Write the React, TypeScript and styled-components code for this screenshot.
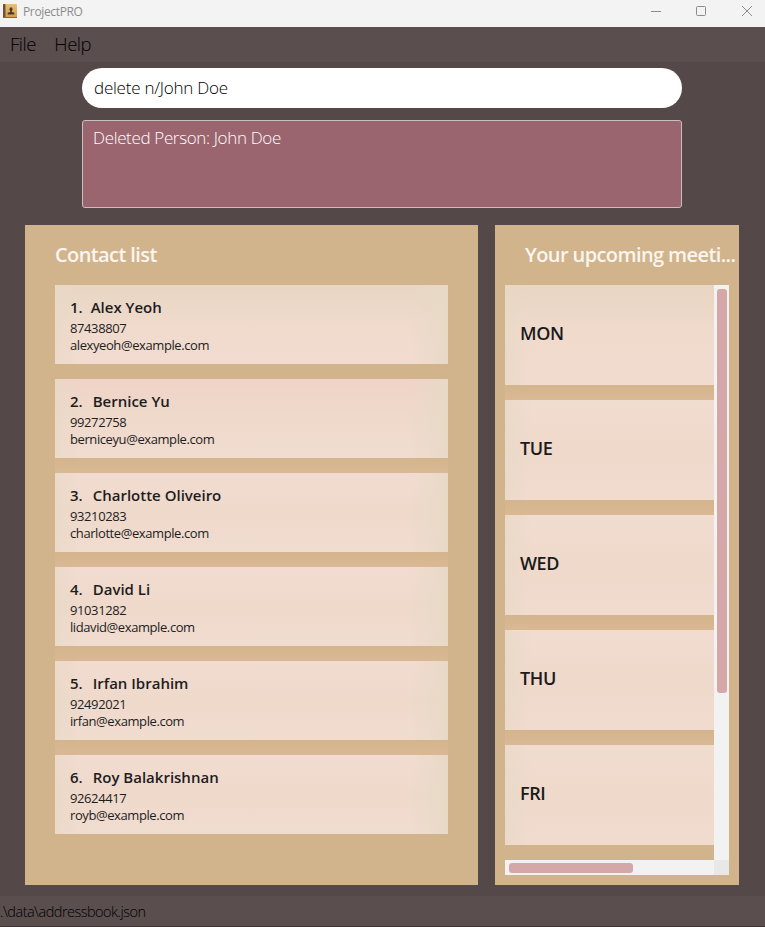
import React from "react";
import styled, { createGlobalStyle } from "styled-components";

const GlobalStyle = createGlobalStyle`
  *, *::before, *::after { box-sizing: border-box; }
  html, body { margin: 0; padding: 0; overflow: hidden; }
  body { font-family: "Open Sans", "Noto Sans", sans-serif; }
`;

const Window = styled.div`
  width: 765px;
  height: 927px;
  display: flex;
  flex-direction: column;
  background: #554849;
`;

const TitleBar = styled.header`
  height: 27px;
  flex: none;
  display: flex;
  align-items: flex-start;
  background: #f3f3f3;
  padding-left: 3px;
`;

const AppIcon = styled.svg`
  width: 14px;
  height: 14px;
  margin-top: 4px;
  flex: none;
`;

const AppName = styled.span`
  margin-left: 6px;
  flex: 1;
  font-size: 12px;
  line-height: 24px;
  letter-spacing: -0.35px;
  color: #8b8b8b;
`;

const WindowControl = styled.svg`
  width: 12px;
  height: 12px;
  margin: 5px 17px 0;
  flex: none;
  fill: none;
  stroke: #8c8c8c;
  &:last-child { margin-right: 12px; }
`;

const MenuBar = styled.nav`
  height: 35px;
  flex: none;
  display: flex;
  gap: 18.5px;
  padding-left: 10px;
  background: #5a4e4f;
`;

const MenuItem = styled.span`
  font-size: 18.5px;
  font-weight: 300;
  line-height: 34px;
  letter-spacing: -0.5px;
  color: #000;
`;

const CommandBox = styled.div`
  width: 600px;
  height: 40px;
  flex: none;
  margin: 6px 0 0 82px;
  padding-left: 12px;
  border-radius: 20px;
  background: #fff;
  color: #000;
  font-size: 17px;
  font-weight: 300;
  line-height: 40px;
  letter-spacing: -0.23px;
`;

const ResultBox = styled.div`
  width: 600px;
  height: 88px;
  flex: none;
  margin: 12px 0 0 82px;
  padding: 4px 10px;
  border: 1px solid #c9bfc0;
  border-radius: 3px;
  background: #9b6570;
  color: #fff;
  font-size: 17px;
  font-weight: 300;
  line-height: 25px;
  letter-spacing: -0.35px;
`;

const Panels = styled.main`
  display: flex;
  gap: 17px;
  height: 660px;
  flex: none;
  margin: 17px 26px 0 25px;
`;

const Panel = styled.section<{ $width: number }>`
  width: ${(p) => p.$width}px;
  background: #d1b48c;
`;

const PanelTitle = styled.h2`
  margin: 0;
  height: 60px;
  padding-left: 30px;
  font-size: 20px;
  font-weight: 600;
  line-height: 60px;
  letter-spacing: -0.6px;
  white-space: nowrap;
  color: #fbf5ef;
`;

const ContactList = styled.div`
  width: 393px;
  margin-left: 30px;
`;

const ContactCard = styled.article<{ $first: boolean; $blush: boolean }>`
  height: 79px;
  padding: 11px 15px 0;
  color: #1d1d1d;
  background:
    linear-gradient(90deg, #e8d9c6b0 0, #e8d9c600 26px, #e8d9c600 calc(100% - 38px), #e8d9c6 100%),
    ${(p) =>
      p.$first
        ? "linear-gradient(#e8d6c3, #efdacc 50%, #f2dcd1)"
        : p.$blush
          ? "linear-gradient(#f1d3c7, #eed9cb 45%, #f1dcd0)"
          : "linear-gradient(#f2dcd1, #eed9cb 50%, #f1dcd0)"};
`;

const CardGap = styled.div<{ $tinted: boolean }>`
  height: 15px;
  background: ${(p) => (p.$tinted ? "linear-gradient(#d3b58c, #dab895)" : "#d1b48c")};
`;

const ContactName = styled.div<{ $gap: number }>`
  display: flex;
  gap: ${(p) => p.$gap}px;
  margin-bottom: 2px;
  font-size: 15px;
  font-weight: 600;
  line-height: 22px;
`;

const ContactDetail = styled.div<{ $track: number }>`
  font-size: 13px;
  line-height: 17px;
  letter-spacing: ${(p) => p.$track}px;
`;

const ScrollPane = styled.div`
  display: grid;
  grid-template-columns: 209px 15px;
  grid-template-rows: 575px 15px;
  width: 224px;
  margin-left: 10px;
`;

const DayList = styled.div`
  overflow: hidden;
`;

const DayCard = styled.div<{ $first: boolean }>`
  height: 100px;
  padding-left: 15px;
  font-size: 18px;
  font-weight: 600;
  line-height: 97px;
  letter-spacing: -0.4px;
  color: #1a1a1a;
  background:
    linear-gradient(90deg, #e8d9c6b0 0, #e8d9c600 26px),
    ${(p) =>
      p.$first
        ? "linear-gradient(#e8d5c2, #efdacc 45%, #f1dbcf)"
        : "linear-gradient(#f1dcd0, #eed9cb 50%, #f1dbcf)"};
`;

const VerticalTrack = styled.div`
  background: #f2f2f2;
  padding: 4px 2px 0 3px;
`;

const HorizontalTrack = styled.div`
  background: #f2f2f2;
  padding: 3px 0 0 4px;
`;

const Corner = styled.div`
  background: #e8e8e8;
`;

const Thumb = styled.div<{ $w: number; $h: number }>`
  width: ${(p) => p.$w}px;
  height: ${(p) => p.$h}px;
  border-radius: 3px;
  background: #d4a8a9;
`;

const StatusBar = styled.footer`
  height: 31px;
  flex: none;
  margin-top: 11px;
  border-bottom: 1px solid #3e3235;
  background: #5a4e4f;
  font-size: 14.5px;
  font-weight: 300;
  line-height: 31px;
  letter-spacing: -0.52px;
  color: #000;
`;

const contacts = [
  { name: "Alex Yeoh", phone: "87438807", email: "alexyeoh@example.com" },
  { name: "Bernice Yu", phone: "99272758", email: "berniceyu@example.com" },
  { name: "Charlotte Oliveiro", phone: "93210283", email: "charlotte@example.com" },
  { name: "David Li", phone: "91031282", email: "lidavid@example.com" },
  { name: "Irfan Ibrahim", phone: "92492021", email: "irfan@example.com" },
  { name: "Roy Balakrishnan", phone: "92624417", email: "royb@example.com" },
];

const days = ["MON", "TUE", "WED", "THU", "FRI"];

export default function App() {
  return (
    <>
      <GlobalStyle />
      <Window>
        <TitleBar>
          <AppIcon viewBox="0 0 14 14">
            <defs>
              <linearGradient id="cover" x1="0" y1="0" x2="0" y2="1">
                <stop offset="0" stopColor="#e6c078" />
                <stop offset="1" stopColor="#d19a45" />
              </linearGradient>
            </defs>
            <rect x="0" y="0" width="14" height="14" rx="0.8" fill="url(#cover)" />
            <rect x="0" y="0" width="2.5" height="14" rx="0.8" fill="#6b5238" />
            <path d="M0 13.5h14" stroke="#8a6536" strokeWidth="1" />
            <ellipse cx="8" cy="5.2" rx="1.5" ry="1.9" fill="#4a3828" />
            <path d="M7.2 6h1.6v2l2.5.8v1.6H4.700V8.800l2.500-.8z" fill="#4a3828" />
          </AppIcon>
          <AppName>ProjectPRO</AppName>
          <WindowControl viewBox="0 0 12 12"><path d="M2 6.500h10" /></WindowControl>
          <WindowControl viewBox="0 0 12 12"><rect x="1.500" y="1.500" width="9" height="9" rx="1" /></WindowControl>
          <WindowControl viewBox="0 0 12 12"><path d="M1 1l10 10M11 1L1 11" /></WindowControl>
        </TitleBar>
        <MenuBar>
          <MenuItem>File</MenuItem>
          <MenuItem>Help</MenuItem>
        </MenuBar>
        <CommandBox>delete n/John Doe</CommandBox>
        <ResultBox>Deleted Person: John Doe</ResultBox>
        <Panels>
          <Panel $width={453}>
            <PanelTitle>Contact list</PanelTitle>
            <ContactList>
              {contacts.map((c, i) => (
                <React.Fragment key={c.name}>
                  {i > 0 && <CardGap $tinted={i > 1} />}
                  <ContactCard $first={i === 0} $blush={i === 1}>
                    <ContactName $gap={i === 0 ? 8 : 10}>
                      <span>{i + 1}.</span>
                      <span>{c.name}</span>
                    </ContactName>
                    <ContactDetail $track={-0.4}>{c.phone}</ContactDetail>
                    <ContactDetail $track={-0.41}>{c.email}</ContactDetail>
                  </ContactCard>
                </React.Fragment>
              ))}
            </ContactList>
          </Panel>
          <Panel $width={244}>
            <PanelTitle>Your upcoming meeti...</PanelTitle>
            <ScrollPane>
              <DayList>
                {days.map((d, i) => (
                  <React.Fragment key={d}>
                    {i > 0 && <CardGap $tinted />}
                    <DayCard $first={i === 0}>{d}</DayCard>
                  </React.Fragment>
                ))}
              </DayList>
              <VerticalTrack><Thumb $w={10} $h={404} /></VerticalTrack>
              <HorizontalTrack><Thumb $w={124} $h={10} /></HorizontalTrack>
              <Corner />
            </ScrollPane>
          </Panel>
        </Panels>
        <StatusBar>.\data\addressbook.json</StatusBar>
      </Window>
    </>
  );
}
